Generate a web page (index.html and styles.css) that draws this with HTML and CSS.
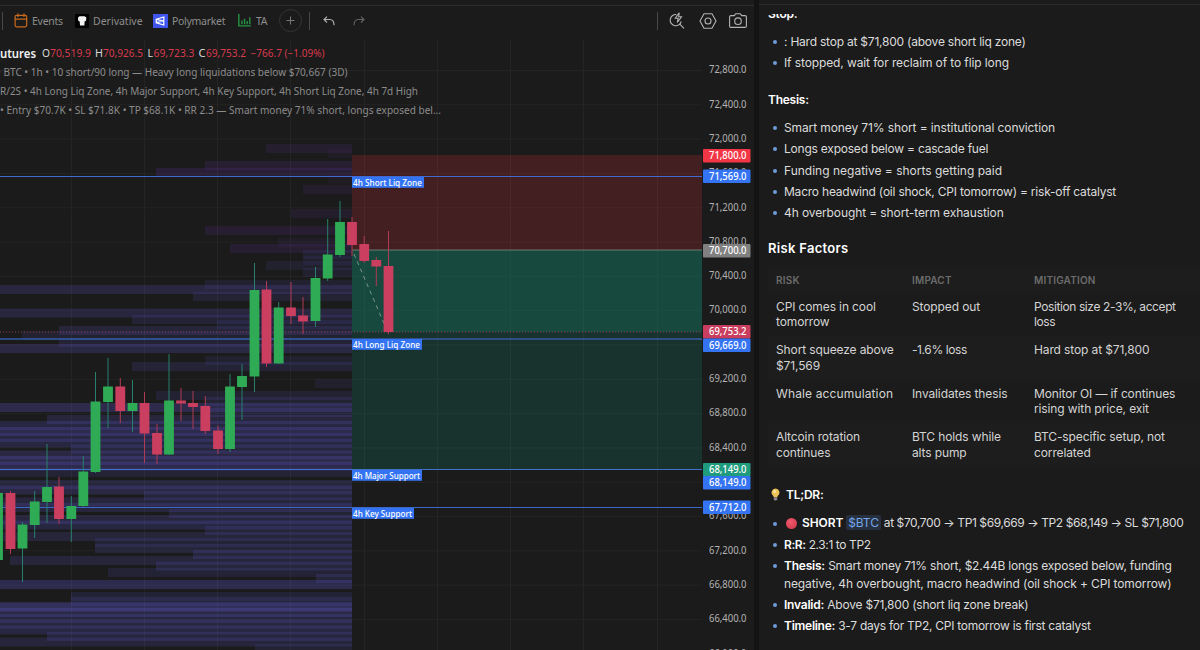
FILE: index.html
```html
<!DOCTYPE html>
<html lang="en">
<head>
  <meta charset="UTF-8">
  <meta name="viewport" content="width=device-width, initial-scale=1.0">
  <title>BTC Futures - Short Setup</title>
  <link rel="stylesheet" href="styles.css">
</head>
<body>
  <div class="app">
    <main class="chart-panel">
      <header class="toolbar">
        <span class="sep sep-first"></span>
        <span class="tool events">
          <svg width="14" height="15" viewBox="0 0 14 15" fill="none" stroke="#c96a1e" stroke-width="1.2"><rect x="1.1" y="2.3" width="11.6" height="11.5" rx="1.5"/><path d="M1 6.2h12M4 .5v3.6M10 .5v3.6"/></svg>
          <span class="name">Events</span>
        </span>
        <span class="tool derivative">
          <svg width="14" height="14" viewBox="0 0 14 14"><rect width="14" height="14" rx="1" fill="#000"/><path d="M3 3.4 4.6 2.2h5L11.4 3.4 11 6.8 9.6 7.6 9.4 11.6H5L4.7 7.6 3.2 6.8z" fill="#f2f2f2"/></svg>
          <span class="name">Derivative</span>
        </span>
        <span class="tool poly">
          <svg width="15" height="14" viewBox="0 0 15 14"><rect width="15" height="14" fill="#3f55ee"/><path d="M3.200 5.300 10.800 3v8L3.200 8.700zM3.200 5.300 10.800 7 3.200 8.700" fill="none" stroke="#fff" stroke-width="1.200"/></svg>
          <span class="name">Polymarket</span>
        </span>
        <span class="tool ta">
          <svg width="13" height="13" viewBox="0 0 13 13" fill="none" stroke="#259344" stroke-width="1.4"><path d="M.8 0v11.9h12M4 6.5v3.8M6.6 4.8v5.5M9.2 7v3.3M11.8 3.2v7.1"/></svg>
          <span class="name">TA</span>
        </span>
        <span class="add"><svg width="9" height="9" viewBox="0 0 9 9" stroke="#777"><path d="M4.5 .5v8M.5 4.5h8"/></svg></span>
        <span class="sep"></span>
        <svg class="undo" width="12" height="10" viewBox="0 0 12 10" fill="none" stroke="#b4b4b4" stroke-width="1.1"><path d="M4 .6 1 3.5l3 3M1 3.5h5.8c2.6 0 4.2 2 4.2 5.8"/></svg>
        <svg class="redo" width="12" height="10" viewBox="0 0 12 10" fill="none" stroke="#666" stroke-width="1.1"><path d="M8 .6l3 2.9-3 3M11 3.5H5.200C2.600 3.500 1 5.500 1 9.300"/></svg>
        <span class="sep sep-right"></span>
        <svg class="flash" width="16" height="17" viewBox="0 0 16 17" fill="none" stroke="#b4b4b4" stroke-width="1.1"><path d="M7.300 2.600A5.600 5.600 0 1 0 12.200 9.500M10.800 12.200l4.200 4.200M10.200 .8 6.300 6.200h2.900L8.300 10.500l4.200-5.700H9.700z"/></svg>
        <svg class="gear" width="18" height="16" viewBox="0 0 18 16" fill="none" stroke="#b4b4b4" stroke-width="1.1"><path d="M5 .8h8l4 7.200-4 7.200H5L1 8z"/><circle cx="9" cy="8" r="3"/></svg>
        <svg class="camera" width="18" height="15" viewBox="0 0 18 15" fill="none" stroke="#b4b4b4" stroke-width="1.1"><path d="M2 2.600h3.300L6.700 .7h4.600l1.400 1.900H16c.8 0 1.400.6 1.400 1.400v9c0 .8-.6 1.400-1.400 1.400H2c-.8 0-1.400-.6-1.400-1.400V4c0-.8.6-1.400 1.400-1.400z"/><circle cx="9" cy="8.200" r="3.300"/></svg>
      </header>
      <svg class="chart" id="chart" width="754" height="610" viewBox="0 40 754 610"></svg>
    </main>

    <aside class="notes">
      <div class="scroll">
        <h4 class="cut">Stop:</h4>
        <ul>
          <li class="tight">: Hard stop at $71,800 (above short liq zone)</li>
          <li>If stopped, wait for reclaim of to flip long</li>
        </ul>
        <h4 class="thesis">Thesis:</h4>
        <ul>
          <li>Smart money 71% short = institutional conviction</li>
          <li class="tight">Longs exposed below = cascade fuel</li>
          <li class="loose">Funding negative = shorts getting paid</li>
          <li class="tight">Macro headwind (oil shock, CPI tomorrow) = risk-off catalyst</li>
          <li>4h overbought = short-term exhaustion</li>
        </ul>
        <h3>Risk Factors</h3>
        <table>
          <thead>
            <tr><th>RISK</th><th>IMPACT</th><th>MITIGATION</th></tr>
          </thead>
          <tbody>
            <tr><td>CPI comes in cool<br>tomorrow</td><td>Stopped out</td><td class="tighter">Position size 2-3%, accept<br>loss</td></tr>
            <tr><td>Short squeeze above<br>$71,569</td><td class="tighter">-1.6% loss</td><td>Hard stop at $71,800</td></tr>
            <tr><td class="wide">Whale accumulation</td><td>Invalidates thesis</td><td>Monitor OI — if continues<br>rising with price, exit</td></tr>
            <tr><td>Altcoin rotation<br>continues</td><td>BTC holds while<br>alts pump</td><td>BTC-specific setup, not<br>correlated</td></tr>
          </tbody>
        </table>
        <h4 class="tldr">
          <svg width="9" height="13" viewBox="0 0 9 13"><path d="M4.500 .5a4 4 0 0 0-2.300 7.200l.6 1.500h3.400l.6-1.500A4 4 0 0 0 4.500 .5z" fill="#eec45a"/><circle cx="3.700" cy="3.600" r="1.500" fill="#f8e4a0"/><path d="M2.800 9.300h3.400v2.200l-1 1H3.800l-1-1z" fill="#8d8790"/></svg>
          TL;DR:
        </h4>
        <ul class="summary">
          <li class="trade"><i class="dot"></i><b>SHORT</b> <span class="ticker">$BTC</span> at $70,700 → TP1 $69,669 → TP2 $68,149 → SL $71,800</li>
          <li class="tighter"><b>R:R:</b> 2.3:1 to TP2</li>
          <li><span class="tight"><b>Thesis:</b> Smart money 71% short, $2.44B longs exposed below, funding</span><br>negative, 4h overbought, macro headwind (oil shock + CPI tomorrow)</li>
          <li class="tight"><b>Invalid:</b> Above $71,800 (short liq zone break)</li>
          <li class="timeline"><b>Timeline:</b> 3-7 days for TP2, CPI tomorrow is first catalyst</li>
        </ul>
      </div>
    </aside>
  </div>
  <script src="chart.js"></script>
</body>
</html>
```
FILE: styles.css
```css
* { box-sizing: border-box; }
body { margin: 0; background: #1b1b1b; color: #dcdcdc; font-family: Inter, "Open Sans", sans-serif; overflow: hidden; }
.app { display: flex; width: 1200px; height: 650px; }

/* chart side */
.chart-panel { width: 759px; padding-top: 5px; border-right: 5px solid #131313; display: flex; flex-direction: column; }
.toolbar { height: 35px; padding: 0 7px 5px 2px; border-top: 1px solid #2e2e2e; display: flex; align-items: center; font-family: "Noto Sans", sans-serif; font-size: 10.5px; color: #8d8d8d; }
.toolbar svg { display: block; flex: none; }
.tool { display: flex; align-items: center; }
.name { white-space: nowrap; }
.events { width: 61px; gap: 4px; letter-spacing: -0.25px; }
.derivative { width: 78px; gap: 4px; }
.poly { width: 85px; gap: 4px; letter-spacing: -0.3px; }
.ta { width: 41px; gap: 5px; letter-spacing: -0.3px; }
.sep { width: 1px; height: 18px; background: #484848; flex: none; }
.sep-first { margin-right: 11px; }
.add { width: 23px; height: 23px; margin-right: 7px; border: 1px solid #343434; border-radius: 50%; display: flex; align-items: center; justify-content: center; flex: none; }
.undo { margin-left: 13px; }
.redo { margin-left: 18px; }
.sep-right { margin-left: auto; }
.flash { margin-left: 11px; }
.gear { margin-left: 14px; }
.camera { margin-left: 12px; }
.chart { display: block; font-family: "Noto Sans", sans-serif; font-size: 10px; }
.legend { fill: #8c8c8c; }
.symbol { fill: #efefef; font-size: 12.5px; font-weight: 600; }
.ohlc-name { fill: #d8d8d8; }
.ohlc-value { fill: #d93a4c; }
.tick { fill: #b3b3b3; }
.tag-text { fill: #fff; font-weight: 500; }
.level-text { fill: #fff; font-size: 9.5px; font-weight: 500; }

/* notes side */
.notes { flex: 1; padding-top: 4px; font-size: 12px; }
.scroll { height: 636px; margin-top: 9px; padding-left: 9px; overflow: hidden; }
.notes::before { content: ""; display: block; height: 1px; background: #2b2b2b; }
h3, h4 { margin: 0; color: #fff; font-weight: 600; }
h3 { margin-top: 14px; font-size: 13px; line-height: 20px; letter-spacing: 0.3px; }
h4 { font-size: 12px; line-height: 18px; letter-spacing: -0.25px; }
.cut { margin-top: -9px; }
.thesis { margin-top: 17px; }
ul { margin: 8px 0 0; padding: 0 0 0 16px; list-style: none; }
.thesis + ul { margin-top: 8.600px; }
li { position: relative; line-height: 17.600px; padding: 1.850px 0; white-space: nowrap; letter-spacing: -0.11px; }
li::before { content: ""; position: absolute; left: -11px; top: 9px; width: 4px; height: 4px; border-radius: 50%; background: #6d9bd8; }
li b { color: #fff; font-weight: 600; }
.tight { letter-spacing: -0.22px; }
.loose { letter-spacing: 0; }
.tighter { letter-spacing: -0.4px; }
.wide { letter-spacing: 0.13px; }
.timeline { letter-spacing: -0.27px; }
table { width: 100%; margin-top: 10.400px; border-collapse: collapse; table-layout: fixed; }
th, td { padding: 6px 0 6px 8px; text-align: left; vertical-align: top; white-space: nowrap; }
th { height: 25px; font-size: 10px; line-height: 13px; font-weight: 600; color: #6c6c6c; letter-spacing: 0.2px; }
th:nth-child(1) { width: 136px; }
th:nth-child(2) { width: 122px; }
td { height: 43.400px; line-height: 15.400px; color: #d4d4d4; }
tbody { letter-spacing: -0.12px; }
thead tr, tbody tr:nth-child(even) { background: #1d1d1d; }
.tldr { margin-top: 19px; padding-left: 3px; display: flex; align-items: center; gap: 6px; }
.summary { margin-top: 9px; }
.trade { letter-spacing: -0.41px; }
.trade b { letter-spacing: -0.1px; }
.dot { display: inline-block; vertical-align: -2px; width: 11px; height: 11px; margin: 0 5px 0 2px; border-radius: 50%; background: radial-gradient(circle at 40% 35%, #ee5a6c, #cf3348); }
.ticker { padding: 0 2px; border-radius: 2px; background: #26303f; color: #75a7ea; letter-spacing: -0.1px; }
```
FILE: chart.js
```js
const RIGHT = 352;   // newest liquidation column
const PLOT = 702;    // right edge of the plot
const out = [];

function rect(x, y, w, h, fill, extra = "") {
  out.push(`<rect x="${x}" y="${y}" width="${w}" height="${h}" fill="${fill}" ${extra}/>`);
}
function line(x1, y1, x2, y2, stroke, extra = "") {
  out.push(`<line x1="${x1}" y1="${y1}" x2="${x2}" y2="${y2}" stroke="${stroke}" ${extra}/>`);
}
function text(x, y, str, cls, width) {
  const fit = width ? `textLength="${width}" lengthAdjust="spacingAndGlyphs"` : "";
  out.push(`<text x="${x}" y="${y}" class="${cls}" ${fit}>${str}</text>`);
}

// grid
for (let i = 0; i < 17; i++) line(0, 70.500 + i * 34.310, PLOT, 70.500 + i * 34.310, "#242424");
[71, 144, 217, 290, 364, 437, 510, 583, 657].forEach(x => line(x + 0.500, 40, x + 0.500, 650, "#242424"));

// liquidation heat: [start x, y, strength]
const shorts = [
  [266, 144, .14], [328, 149, .08], [205, 161, .17], [156, 168, .2], [328, 175, .06], [303, 185, .12],
  [291, 209, .12], [205, 226, .17], [278, 238, .11], [230, 244, .16]
];
const longs = [
  [303, 250, .12], [303, 256, .1], [266, 261, .11], [303, 268, .12], [205, 280, .12], [0, 285, .22], [193, 292, .14],
  [0, 308.500, .21], [132, 315, .16], [217, 320, .12], [59, 326, .18], [22, 331, .13], [59, 338, .16],
  [0, 344, .24], [205, 356, .12], [132, 362, .17], [315, 379, .1],
  [156, 391, .15], [0, 403, .24], [205, 397, .14], [205, 408, .15], [47, 415, .17], [0, 421, .19],
  [0, 427, .24], [0, 433, .18], [0, 438.500, .19], [71, 444.500, .17], [0, 450.500, .2],
  [0, 456, .22], [0, 461.500, .24], [0, 468, .13], [0, 480, .17], [0, 485.500, .2],
  [144, 491, .15], [0, 497.500, .17], [0, 503, .17], [169, 509, .14], [0, 515, .17], [0, 520.500, .19],
  [205, 526, .15], [0, 532, .15], [95, 538, .13], [95, 544, .15], [193, 550, .17], [10, 556, .15],
  [156, 561.500, .17], [108, 568, .13], [316, 574, .15], [0, 580, .25], [71, 592, .13],
  [71, 597, .14], [0, 602, .21], [0, 603, .14], [0, 608, .22], [0, 614, .18], [0, 619.500, .18],
  [0, 625.500, .19], [47, 632, .17], [0, 637.500, .16], [255, 644, .12]
];
shorts.forEach(([x, y, a]) => rect(x, y, RIGHT - x, 9, "rgb(108,52,180)", `fill-opacity="${a * .9}"`));
longs.forEach(([x, y, a]) => rect(x, y, RIGHT - x, 9, "rgb(90,82,196)", `fill-opacity="${y > 400 ? a * 1.2 : a}"`));

// short position: stop zone, filled profit, remaining target
rect(RIGHT, 155, PLOT - RIGHT, 95, "#f23645", 'fill-opacity=".19"');
rect(RIGHT, 250, PLOT - RIGHT, 82, "#109a7d", 'fill-opacity=".36"');
rect(RIGHT, 332, PLOT - RIGHT, 138, "#109a7d", 'fill-opacity=".19"');
line(RIGHT, 250, PLOT, 250, "#7f9087", 'stroke-width=".8"');
line(354, 254, 386, 328, "#7d958d", 'stroke-dasharray="4 4"');

// last price and levels
line(0, 332, PLOT, 332, "#8e3848", 'stroke-dasharray="1 2"');
line(0, 176.500, PLOT, 176.500, "#4169cf");
line(0, 339, PLOT, 339, "#355ba8", 'stroke-width="1.500"');
line(0, 469.500, PLOT, 469.500, "#3f70ca");
line(0, 507.500, PLOT, 507.500, "#3c67c6");

// candles: [x, high, low, body top, body bottom, up]
const candles = [
  [-2, 493, 560, 493, 560, 1], [10.500, 491, 554, 493, 549, 0], [22.500, 522, 582, 524.500, 548.500, 1],
  [34.700, 491, 538, 501.500, 525, 1], [47, 444, 523, 487, 502, 1], [59, 477, 524, 486.500, 519, 0],
  [71.300, 496, 542, 506, 519, 1], [83.300, 456, 507, 471.500, 506, 1], [95.500, 372, 473, 401.500, 472, 1],
  [108, 358, 428, 386.500, 402, 1], [120.300, 378, 423, 386.500, 411, 0], [132.500, 380, 432, 403, 411, 1],
  [144.500, 392, 463, 403, 433.500, 0], [157, 424, 464, 433, 454.500, 0], [169, 354, 455, 400.500, 454.500, 1],
  [181, 388, 421, 400.500, 403.500, 0], [193, 391, 429, 403, 407, 0], [205.300, 396, 434, 406, 431, 0],
  [218, 425.500, 454, 430.500, 449, 0], [230, 374, 452, 386.500, 449, 1], [242, 364, 420, 376, 387, 1],
  [254.500, 263, 392, 290, 376.500, 1], [266.500, 281, 367, 289.500, 363.500, 0], [278.700, 302, 364, 307.500, 363.500, 1],
  [291, 282, 324, 307.500, 316, 0], [303, 297, 334, 315.500, 321.500, 0], [315.500, 267, 327, 278, 321, 1],
  [327.700, 219, 281, 254.500, 278.500, 1], [340, 201, 257, 222, 255, 1], [352, 217, 256, 222, 245, 0],
  [364.200, 236, 263, 244, 261, 0], [376.300, 257, 286, 260, 266.500, 0], [388.500, 231, 334, 266, 332, 0]
];
candles.forEach(([x, hi, lo, top, bottom, up]) => {
  line(x, hi, x, lo, up ? "#27806a" : "#b23a54");
  rect(x - 4.900, top, 9.800, bottom - top, up ? "#2fab55" : "#ca3f5f");
});

// level names
[[177, 72, "4h Short Liq Zone"], [339, 70, "4h Long Liq Zone"], [470, 70, "4h Major Support"], [508, 62, "4h Key Support"]]
  .forEach(([y, w, name]) => {
    rect(RIGHT, y, w, 10.800, "#3474f2");
    text(RIGHT + 1, y + 8.500, name, "level-text", w - 3);
  });

// price axis
rect(PLOT, 40, 52, 610, "#1b1b1b");
for (let i = 0; i < 18; i++) {
  const price = (72800 - i * 400).toLocaleString("en-US") + ".0";
  if (price !== "69,600.0") text(709, 73.300 + i * 34.310, price, "tick", 37.500);
}
[
  [244, "70,700.0", "#808080"], [149, "71,800.0", "#f23645"], [169.500, "71,569.0", "#3474f2"],
  [325, "69,753.2", "#c93d5e"], [338.500, "69,669.0", "#3474f2"],
  [463, "68,149.0", "#1f9b7e"], [476, "68,149.0", "#3474f2"], [500.500, "67,712.0", "#3474f2"]
].forEach(([y, price, color]) => {
  rect(703, y, 47.500, 13.500, color, 'rx="1"');
  text(709, y + 10.200, price, "tag-text", 37.500);
});

// legend
text(0, 57.500, "utures", "symbol", 36);
[["O", 42, 8, "70,519.9", 50, 41], ["H", 95, 8, "70,926.5", 103, 40], ["L", 147.500, 5.500, "69,723.3", 153.500, 41], ["C", 198.500, 7, "69,753.2", 206, 40]]
  .forEach(([k, kx, kw, v, vx, vw]) => {
    text(kx, 56.500, k, "ohlc-name", kw);
    text(vx, 56.500, v, "ohlc-value", vw);
  });
text(250.500, 56.500, "−766.7 (−1.09%)", "ohlc-value", 74);
text(-3, 75.500, "•", "legend");
text(3.500, 75.500, "BTC • 1h • 10 short/90 long — Heavy long liquidations below $70,667 (3D)", "legend", 344);
text(0, 94.500, "R/2S • 4h Long Liq Zone, 4h Major Support, 4h Key Support, 4h Short Liq Zone, 4h 7d High", "legend", 418);
text(0, 113.500, "• Entry $70.7K • SL $71.8K • TP $68.1K • RR 2.3 — Smart money 71% short, longs exposed bel...", "legend", 441);

document.getElementById("chart").innerHTML = out.join("");
```
